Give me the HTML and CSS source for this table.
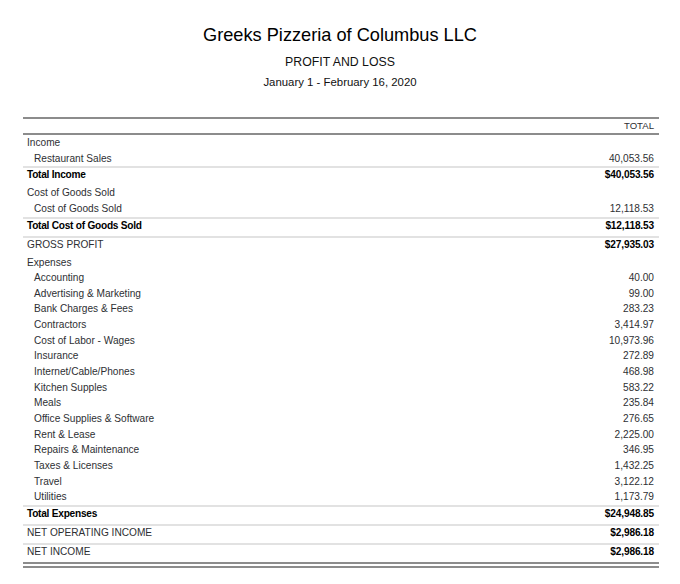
FILE: index.html
```html
<!DOCTYPE html>
<html>
<head>
<meta charset="utf-8">
<link rel="stylesheet" href="styles.css">
</head>
<body>
<div class="report">
  <header class="head">
    <div class="company">Greeks Pizzeria of Columbus LLC</div>
    <div class="title">PROFIT AND LOSS</div>
    <div class="period">January 1 - February 16, 2020</div>
  </header>
  <div class="table">
    <div class="colhead"><span></span><span>TOTAL</span></div>
    <div class="row"><span>Income</span><span></span></div>
    <div class="row sub"><span>Restaurant Sales</span><span>40,053.56</span></div>
    <div class="row total"><span>Total Income</span><span>$40,053.56</span></div>
    <div class="row"><span>Cost of Goods Sold</span><span></span></div>
    <div class="row sub"><span>Cost of Goods Sold</span><span>12,118.53</span></div>
    <div class="row total"><span>Total Cost of Goods Sold</span><span>$12,118.53</span></div>
    <div class="row grand"><span>GROSS PROFIT</span><span class="amt">$27,935.03</span></div>
    <div class="row"><span>Expenses</span><span></span></div>
    <div class="row sub"><span>Accounting</span><span>40.00</span></div>
    <div class="row sub"><span>Advertising &amp; Marketing</span><span>99.00</span></div>
    <div class="row sub"><span>Bank Charges &amp; Fees</span><span>283.23</span></div>
    <div class="row sub"><span>Contractors</span><span>3,414.97</span></div>
    <div class="row sub"><span>Cost of Labor - Wages</span><span>10,973.96</span></div>
    <div class="row sub"><span>Insurance</span><span>272.89</span></div>
    <div class="row sub"><span>Internet/Cable/Phones</span><span>468.98</span></div>
    <div class="row sub"><span>Kitchen Supples</span><span>583.22</span></div>
    <div class="row sub"><span>Meals</span><span>235.84</span></div>
    <div class="row sub"><span>Office Supplies &amp; Software</span><span>276.65</span></div>
    <div class="row sub"><span>Rent &amp; Lease</span><span>2,225.00</span></div>
    <div class="row sub"><span>Repairs &amp; Maintenance</span><span>346.95</span></div>
    <div class="row sub"><span>Taxes &amp; Licenses</span><span>1,432.25</span></div>
    <div class="row sub"><span>Travel</span><span>3,122.12</span></div>
    <div class="row sub"><span>Utilities</span><span>1,173.79</span></div>
    <div class="row total"><span>Total Expenses</span><span>$24,948.85</span></div>
    <div class="row grand"><span>NET OPERATING INCOME</span><span class="amt">$2,986.18</span></div>
    <div class="row grand last"><span>NET INCOME</span><span class="amt">$2,986.18</span></div>
  </div>
</div>
</body>
</html>
```
FILE: styles.css
```css
html, body {
  margin: 0;
  padding: 0;
  background: #ffffff;
}
body {
  font-family: "Liberation Sans", Arial, sans-serif;
  color: #2e2f33;
}
.report {
  width: 680px;
  height: 584px;
  overflow: hidden;
}
.head {
  display: flex;
  flex-direction: column;
  align-items: center;
  padding-top: 24px;
}
.company {
  font-size: 18.2px;
  line-height: 22px;
  color: #000;
}
.title {
  margin-top: 8px;
  font-size: 12.3px;
  line-height: 16px;
  color: #111;
}
.period {
  margin-top: 5px;
  font-size: 11.4px;
  line-height: 14px;
  color: #111;
}
.table {
  margin-top: 28px;
  margin-left: 23px;
  width: 636px;
  border-top: 2px solid #8c8c8c;
}
.colhead {
  display: flex;
  justify-content: space-between;
  height: 14px;
  line-height: 14px;
  font-size: 9.6px;
  padding-right: 5px;
  border-bottom: 2px solid #8c8c8c;
  color: #2e2f33;
}
.row {
  display: flex;
  justify-content: space-between;
  font-size: 10.15px;
  line-height: 15.64px;
  padding-left: 4px;
  padding-right: 5px;
}
.row.sub {
  padding-left: 11px;
}
.row.total,
.row.grand {
  border-top: 2px solid #e2e2e2;
  line-height: 14px;
  padding-bottom: 3px;
}
.row.total,
.row .amt {
  font-weight: bold;
  color: #000;
  letter-spacing: -0.15px;
}
.row.total span:first-child {
  letter-spacing: -0.25px;
}
.row.last {
  border-bottom: 6px double #8c8c8c;
}
```
